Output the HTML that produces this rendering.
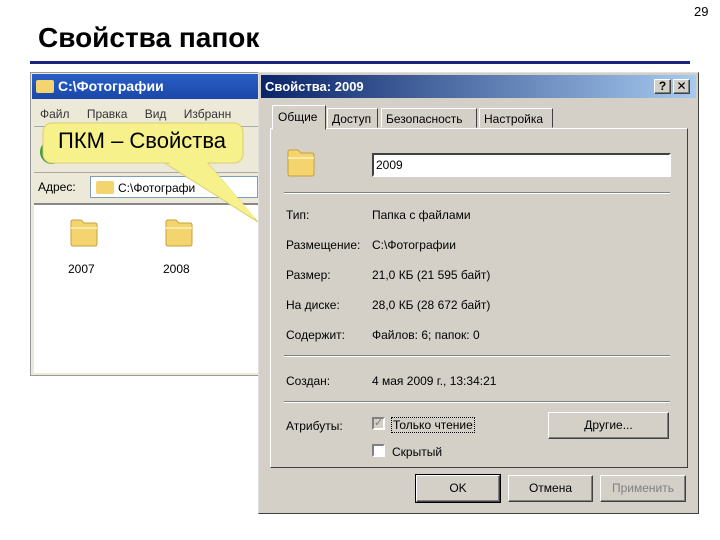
<!DOCTYPE html>
<html><head><meta charset="utf-8"><style>
*{margin:0;padding:0;box-sizing:border-box}
body{width:720px;height:540px;background:#fff;position:relative;overflow:hidden;font-family:"Liberation Sans","DejaVu Sans",sans-serif;}
.a{position:absolute}
.t{font-size:12px;color:#000}
.fold{position:absolute;width:32px;height:32px}
.btn{position:absolute;background:#d4d0c8;border:1px solid;border-color:#fff #404040 #404040 #fff;box-shadow:inset -1px -1px 0 #808080;font-size:12px;text-align:center;line-height:24px}
</style></head><body>
<div class="a" style="left:694px;top:4px;font-size:13px">29</div>
<div class="a" style="left:38px;top:22px;font-size:28px;font-weight:bold;color:#000">Свойства папок</div>
<div class="a" style="left:30px;top:61px;width:660px;height:3px;background:#1a237e"></div>

<!-- Explorer -->
<div class="a" style="left:30px;top:72px;width:230px;height:304px;background:#ece9d8;border:1px solid #999"></div>
<div class="a" style="left:32px;top:74px;width:226px;height:25px;background:linear-gradient(#2a5fc7,#1a47a8);color:#fff;font-weight:bold;font-size:14px;line-height:25px;padding-left:26px">C:\Фотографии</div>
<div class="a" style="left:36px;top:80px;width:18px;height:13px;background:#f3d46e;border-radius:2px"></div>
<div class="a t" style="left:40px;top:107px;color:#333;word-spacing:14px">Файл Правка Вид Избранн</div>
<div class="a" style="left:34px;top:126px;width:224px;height:1px;background:#aaa"></div>
<div class="a" style="left:40px;top:140px;width:24px;height:24px;border-radius:50%;background:#3c9a3c"></div>
<div class="a" style="left:34px;top:172px;width:224px;height:1px;background:#aaa"></div>
<div class="a t" style="left:38px;top:180px">Адрес:</div>
<div class="a" style="left:90px;top:176px;width:168px;height:22px;background:#fff;border:1px solid #7f9db9"></div>
<div class="a" style="left:96px;top:181px;width:18px;height:13px;background:#f3d46e;border-radius:2px"></div>
<div class="a t" style="left:118px;top:181px">C:\Фотографи</div>
<div class="a" style="left:34px;top:203px;width:224px;height:170px;background:#fff;border-top:2px solid #888"></div>
<svg class="fold" style="left:68px;top:216px" viewBox="0 0 32 32"><path d="M3 6q0-2 2-2h8l3 3h11q2 0 2 2v19q0 2-2 2H5q-2 0-2-2z" fill="#f3d46e" stroke="#c9a13a"/><path d="M3 12h26" stroke="#fbe9a8" stroke-width="2"/></svg>
<svg class="fold" style="left:163px;top:216px" viewBox="0 0 32 32"><path d="M3 6q0-2 2-2h8l3 3h11q2 0 2 2v19q0 2-2 2H5q-2 0-2-2z" fill="#f3d46e" stroke="#c9a13a"/><path d="M3 12h26" stroke="#fbe9a8" stroke-width="2"/></svg>
<div class="a t" style="left:68px;top:262px">2007</div>
<div class="a t" style="left:163px;top:262px">2008</div>

<!-- Dialog -->
<div class="a" style="left:258px;top:72px;width:441px;height:442px;background:#d4d0c8;border:1px solid;border-color:#e0e0e0 #404040 #404040 #e0e0e0"></div>
<div class="a" style="left:261px;top:75px;width:435px;height:23px;background:linear-gradient(90deg,#0a246a,#a6caf0);color:#fff;font-weight:bold;font-size:13px;line-height:23px;padding-left:4px">Свойства: 2009</div>
<div class="btn" style="left:654px;top:79px;width:17px;height:15px;line-height:13px;font-weight:bold">?</div>
<div class="btn" style="left:673px;top:79px;width:17px;height:15px;line-height:13px;font-weight:bold">✕</div>
<div class="a" style="left:270px;top:128px;width:418px;height:340px;border:1px solid;border-color:#fff #404040 #404040 #fff"></div>
<div class="a" style="left:272px;top:105px;width:54px;height:25px;background:#d4d0c8;border:1px solid;border-color:#fff #404040 transparent #fff;font-size:12px;padding:4px 0 0 5px">Общие</div>
<div class="a" style="left:327px;top:108px;width:51px;height:20px;border:1px solid;border-color:#fff #404040 transparent #fff;font-size:12px;padding:3px 0 0 4px">Доступ</div>
<div class="a" style="left:381px;top:108px;width:96px;height:20px;border:1px solid;border-color:#fff #404040 transparent #fff;font-size:12px;padding:3px 0 0 4px">Безопасность</div>
<div class="a" style="left:479px;top:108px;width:74px;height:20px;border:1px solid;border-color:#fff #404040 transparent #fff;font-size:12px;padding:3px 0 0 4px">Настройка</div>
<svg class="fold" style="left:285px;top:146px" viewBox="0 0 32 32"><path d="M3 6q0-2 2-2h8l3 3h11q2 0 2 2v19q0 2-2 2H5q-2 0-2-2z" fill="#f3d46e" stroke="#c9a13a"/><path d="M3 12h26" stroke="#fbe9a8" stroke-width="2"/></svg>
<div class="a" style="left:372px;top:153px;width:299px;height:24px;background:#fff;border:2px solid;border-color:#404040 #fff #fff #404040;font-size:12px;padding:3px 2px">2009</div>
<div class="a" style="left:284px;top:192px;width:386px;height:2px;border-top:1px solid #808080;border-bottom:1px solid #fff"></div>
<div class="a t" style="left:286px;top:208px">Тип:</div><div class="a t" style="left:372px;top:208px">Папка с файлами</div>
<div class="a t" style="left:286px;top:238px">Размещение:</div><div class="a t" style="left:372px;top:238px">C:\Фотографии</div>
<div class="a t" style="left:286px;top:268px">Размер:</div><div class="a t" style="left:372px;top:268px">21,0 КБ (21 595 байт)</div>
<div class="a t" style="left:286px;top:298px">На диске:</div><div class="a t" style="left:372px;top:298px">28,0 КБ (28 672 байт)</div>
<div class="a t" style="left:286px;top:328px">Содержит:</div><div class="a t" style="left:372px;top:328px">Файлов: 6; папок: 0</div>
<div class="a" style="left:284px;top:355px;width:386px;height:2px;border-top:1px solid #808080;border-bottom:1px solid #fff"></div>
<div class="a t" style="left:286px;top:374px">Создан:</div><div class="a t" style="left:372px;top:374px">4 мая 2009 г., 13:34:21</div>
<div class="a" style="left:284px;top:401px;width:386px;height:2px;border-top:1px solid #808080;border-bottom:1px solid #fff"></div>
<div class="a t" style="left:286px;top:419px">Атрибуты:</div>
<div class="a" style="left:372px;top:417px;width:13px;height:13px;background:#d4d0c8;border:2px solid;border-color:#808080 #fff #fff #808080;font-size:11px;line-height:9px;color:#808080;text-align:center">✓</div>
<div class="a t" style="left:391px;top:417px;border:1px dotted #000;padding:0 1px">Только чтение</div>
<div class="a" style="left:372px;top:444px;width:13px;height:13px;background:#fff;border:2px solid;border-color:#808080 #fff #fff #808080"></div>
<div class="a t" style="left:392px;top:445px">Скрытый</div>
<div class="btn" style="left:548px;top:412px;width:121px;height:27px"><u>Д</u>ругие...</div>
<div class="btn" style="left:416px;top:475px;width:84px;height:27px;outline:1px solid #000">OK</div>
<div class="btn" style="left:508px;top:475px;width:85px;height:27px">Отмена</div>
<div class="btn" style="left:600px;top:475px;width:86px;height:27px;color:#808080">Применить</div>

<!-- Callout -->
<svg class="a" style="left:0;top:0" width="720" height="540">
<polygon points="160,160 205,160 258,222" fill="#f7f18c" stroke="#d8d070" stroke-width="1"/>
<rect x="43" y="123" width="200" height="40" rx="9" fill="#f7f18c" stroke="#d8d070"/>
<polygon points="162,158 203,158 256,219" fill="#f7f18c"/>
</svg>
<div class="a" style="left:58px;top:128px;font-size:22px;color:#000">ПКМ – Свойства</div>
</body></html>
